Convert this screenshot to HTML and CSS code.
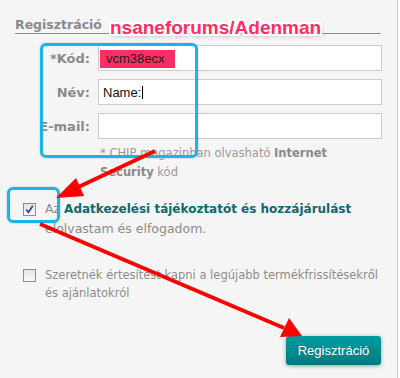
FILE: index.html
```html
<!DOCTYPE html>
<html lang="hu">
<head>
<meta charset="utf-8">
<link rel="stylesheet" href="styles.css">
</head>
<body>
<div class="page">
  <div class="legend">Regisztráció</div>
  <div class="form">
    <div class="row"><label class="lbl">*Kód:</label><div class="input"><span class="hl">vcm38ecx</span></div></div>
    <div class="row"><label class="lbl">Név:</label><div class="input"><span class="val">Name:</span><span class="caret"></span></div></div>
    <div class="row"><label class="lbl">E-mail:</label><div class="input"></div></div>
    <p class="note">* CHIP magazinban olvasható <b>Internet</b><br><b>Security</b> kód</p>
    <div class="check c1">
      <span class="box"><svg width="9" height="9" viewBox="0 0 9 9"><path d="M1.2 4.6 L3.4 7.4 L7.8 0.8" fill="none" stroke="#2e3a9c" stroke-width="1.6"/></svg></span>
      <span class="ctext">Az <a class="link">Adatkezelési tájékoztatót és hozzájárulást</a><br>elolvastam és elfogadom.</span>
    </div>
    <div class="check c2">
      <span class="box"></span>
      <span class="ctext">Szeretnék értesítést kapni a legújabb termékfrissítésekről<br>és ajánlatokról</span>
    </div>
    <div class="actions"><button class="btn">Regisztráció</button></div>
  </div>
  <div class="watermark">nsaneforums/Adenman</div>
  <div class="mark mark1"></div>
  <div class="mark mark2"></div>
  <svg class="arrows" width="400" height="378" viewBox="0 0 400 378">
    <g fill="#ff0000" stroke="#ff0000">
      <line x1="155" y1="151" x2="72" y2="190" stroke-width="4"/>
      <polygon points="56,198 76,178 84,196" stroke="none"/>
      <line x1="40" y1="224" x2="284" y2="328" stroke-width="4"/>
      <polygon points="302,336 280,337 289,318" stroke="none"/>
    </g>
  </svg>
</div>
</body>
</html>
```
FILE: styles.css
```css
html, body {
  margin: 0;
  padding: 0;
  background: #ffffff;
}
.page {
  position: relative;
  width: 397px;
  height: 378px;
  background: #f5f5f5;
  border-right: 1px solid #c9c9c9;
  font-family: "DejaVu Sans", Verdana, sans-serif;
  overflow: hidden;
}
.legend {
  margin: 0 16px 0 15px;
  padding-top: 17px;
  line-height: 16px;
  font-size: 12.5px;
  font-weight: bold;
  color: #8a8a8a;
  border-bottom: 1px solid #8f8f8f;
}
.form {
  display: flex;
  flex-direction: column;
  padding-top: 11px;
}
.row {
  display: flex;
  align-items: center;
  gap: 8px;
  margin-bottom: 8px;
}
.row:nth-child(3) { margin-bottom: 0; }
.lbl {
  width: 90px;
  text-align: right;
  font-size: 13px;
  font-weight: bold;
  color: #8a8a8a;
}
.input {
  box-sizing: border-box;
  width: 284px;
  height: 26px;
  background: #fff;
  border: 1px solid #cccccc;
  display: flex;
  align-items: center;
  padding-left: 4px;
  font-family: "Liberation Sans", Arial, sans-serif;
  font-size: 13px;
  color: #111;
}
.hl {
  background: #ff2c66;
  padding: 0 10px 0 6px;
  line-height: 18px;
  margin-left: -3px;
  margin-top: 1px;
  color: #1a1a1a;
}
.val { color: #111; }
.caret {
  width: 1px;
  height: 13px;
  background: #000;
  margin-left: 1px;
}
.note {
  margin: 5px 0 0 100px;
  font-size: 11.5px;
  line-height: 19px;
  color: #9a9a9a;
}
.note b { color: #8a8a8a; }
.check {
  display: flex;
  align-items: flex-start;
  gap: 9px;
  padding-left: 23px;
}
.c1 {
  margin-top: 17px;
  font-size: 12.5px;
  line-height: 20px;
}
.c1 .link { font-size: 12px; }
.c2 {
  margin-top: 27px;
  font-size: 11.5px;
  line-height: 18px;
}
.box {
  box-sizing: border-box;
  flex: none;
  width: 13px;
  height: 13px;
  border: 1px solid #8e8e8e;
  background: linear-gradient(#e4e4e4, #fafafa);
  display: flex;
  align-items: center;
  justify-content: center;
}
.c1 .box { margin-top: 4px; }
.c2 .box { margin-top: 3px; }
.ctext { color: #8c8c8c; }
.link {
  color: #0b6a70;
  font-weight: bold;
}
.actions {
  display: flex;
  justify-content: flex-end;
  padding-right: 16px;
  margin-top: 34px;
}
.btn {
  width: 95px;
  height: 29px;
  border: none;
  border-radius: 3px;
  background: linear-gradient(#009ca0, #007a80);
  color: #fff;
  font-family: "Liberation Sans", Arial, sans-serif;
  font-size: 13px;
  padding: 0;
  box-shadow: 0 1px 4px rgba(0,0,0,0.35);
}
.watermark {
  position: absolute;
  left: 110px;
  top: 16px;
  font-family: "Liberation Sans", Arial, sans-serif;
  font-weight: bold;
  font-size: 19px;
  line-height: 24px;
  color: #ff2c66;
  text-shadow:
    -2px 0 0 #fff, 2px 0 0 #fff, 0 -2px 0 #fff, 0 2px 0 #fff,
    -1px -1px 0 #fff, 1px -1px 0 #fff, -1px 1px 0 #fff, 1px 1px 0 #fff,
    -2px -2px 0 #fff, 2px -2px 0 #fff, -2px 2px 0 #fff, 2px 2px 0 #fff,
    1px 2px 4px rgba(0,0,0,0.45);
}
.mark {
  position: absolute;
  box-sizing: border-box;
  border: 3px solid #1cb3e9;
  border-radius: 6px;
  box-shadow: 0 0 2px rgba(0,0,0,0.25);
}
.mark1 {
  left: 40px;
  top: 43px;
  width: 158px;
  height: 115px;
}
.mark2 {
  left: 7px;
  top: 187px;
  width: 53px;
  height: 36px;
}
.arrows {
  position: absolute;
  left: 0;
  top: 0;
}
```
